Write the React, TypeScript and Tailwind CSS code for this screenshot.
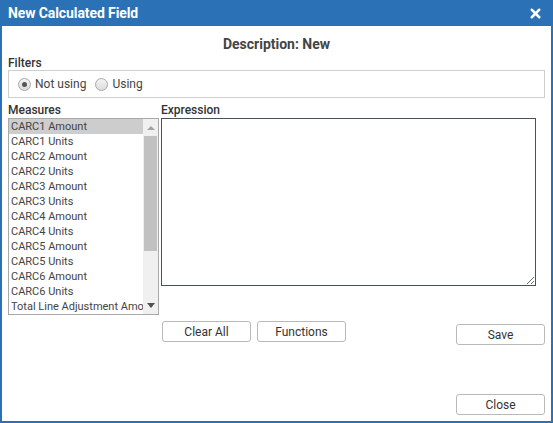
import { X } from 'lucide-react';

const MEASURES = [
  'CARC1 Amount', 'CARC1 Units', 'CARC2 Amount', 'CARC2 Units', 'CARC3 Amount', 'CARC3 Units',
  'CARC4 Amount', 'CARC4 Units', 'CARC5 Amount', 'CARC5 Units', 'CARC6 Amount', 'CARC6 Units',
  'Total Line Adjustment Amount',
];

function Radio({ checked, label }: { checked?: boolean; label: string }) {
  return (
    <label className="flex items-center gap-[4px]">
      <span className="w-[13px] h-[13px] rounded-full border border-[#a8a8a8] bg-gradient-to-b from-[#f4f4f4] to-[#dcdcdc] flex items-center justify-center">
        {checked && <span className="w-[5px] h-[5px] rounded-full bg-[#555]" />}
      </span>
      <span className="text-[12px] text-[#444]">{label}</span>
    </label>
  );
}

function Btn({ children, className = '' }: { children: string; className?: string }) {
  return (
    <button className={`h-[21px] w-[89px] rounded-[3px] border border-[#b9b9b9] bg-white text-[12px] text-[#333] ${className}`}>
      {children}
    </button>
  );
}

export default function App() {
  return (
    <div className="w-[553px] h-[423px] bg-white border-x-2 border-b-2 border-[#2a72b5] flex flex-col font-['Roboto',sans-serif] text-[#333]">
      <div className="h-[26px] bg-[#2a72b5] flex items-center justify-between pl-[6px] pr-[8px] shrink-0">
        <span className="text-white font-bold text-[14px] tracking-[-0.1px]">New Calculated Field</span>
        <X className="w-[15px] h-[15px] text-white" strokeWidth={4} />
      </div>

      <div className="flex-1 flex flex-col px-[6px]">
        <p className="text-center font-bold text-[14px] text-[#444] pt-[9px] leading-[18px]">Description: New</p>

        <p className="text-[12px] font-medium leading-[14px] mt-[3px]">Filters</p>
        <div className="h-[28px] border border-[#cfcfcf] flex items-center gap-[9px] pl-[9px]">
          <Radio checked label="Not using" />
          <Radio label="Using" />
        </div>

        <div className="flex gap-[2px] mt-[5px]">
          <div className="w-[151px]">
            <p className="text-[12px] font-medium leading-[14px]">Measures</p>
            <div className="h-[197px] border border-[#a9a9a9] flex mt-[1px]">
              <div className="flex-1 min-w-0">
                {MEASURES.map((m, i) => (
                  <div
                    key={m}
                    className={`h-[15px] leading-[15px] pl-[2px] text-[11px] text-[#444] whitespace-nowrap overflow-hidden ${i === 0 ? 'bg-[#cdcdcd]' : ''}`}
                  >
                    {m}
                  </div>
                ))}
              </div>
              <div className="w-[15px] bg-[#f0f0f0] flex flex-col items-center shrink-0">
                <div className="h-[17px] flex items-center justify-center">
                  <span className="w-0 h-0 border-x-[4px] border-x-transparent border-b-[4px] border-b-[#a3a3a3]" />
                </div>
                <div className="w-[13px] h-[115px] bg-[#c1c1c1]" />
                <div className="flex-1" />
                <div className="h-[17px] flex items-center justify-center">
                  <span className="w-0 h-0 border-x-[4px] border-x-transparent border-t-[5px] border-t-[#505050]" />
                </div>
              </div>
            </div>
          </div>

          <div className="flex-1 flex flex-col">
            <p className="text-[12px] font-medium leading-[14px]">Expression</p>
            <textarea className="w-[375px] h-[168px] border border-[#45535e] mt-[1px] outline-none resize" />
            <div className="flex items-start mt-[35px] ml-[1px] gap-[6px]">
              <Btn>Clear All</Btn>
              <Btn>Functions</Btn>
              <Btn className="ml-auto mt-[3px]">Save</Btn>
            </div>
          </div>
        </div>

        <div className="flex-1" />
        <div className="flex justify-end pb-[6px]">
          <Btn>Close</Btn>
        </div>
      </div>
    </div>
  );
}
